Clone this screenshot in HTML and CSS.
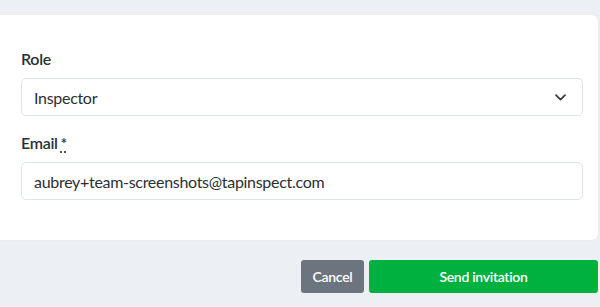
FILE: index.html
```html
<!DOCTYPE html>
<html>
<head>
<meta charset="utf-8">
<link rel="stylesheet" href="styles.css">
</head>
<body>
<div class="page">
  <div class="card">
    <div class="field">
      <label class="label">Role</label>
      <div class="select">
        <span>Inspector</span>
        <svg class="chev" width="11" height="7" viewBox="0 0 11 7"><path d="M1 1.2 L5.5 5.6 L10 1.2" fill="none" stroke="#343a40" stroke-width="1.7" stroke-linecap="round" stroke-linejoin="round"/></svg>
      </div>
    </div>
    <div class="field">
      <label class="label">Email <abbr class="req">*</abbr></label>
      <div class="input">aubrey+team-screenshots@tapinspect.com</div>
    </div>
  </div>
  <div class="actions">
    <button class="btn btn-cancel">Cancel</button>
    <button class="btn btn-send">Send invitation</button>
  </div>
</div>
</body>
</html>
```
FILE: styles.css
```css
html, body {
  margin: 0;
  padding: 0;
  background: #ecf0f4;
  font-family: Lato, "Liberation Sans", sans-serif;
  color: #212529;
}
.page {
  padding-top: 15px;
}
.card {
  background: #fff;
  margin-right: 2px;
  border-radius: 0 6px 6px 0;
  box-shadow: 0 0 1px rgba(0,0,0,0.12);
  padding: 32px 15px 40px 21px;
}
.field + .field {
  margin-top: 15px;
}
.label {
  display: block;
  font-size: 16px;
  font-weight: 600;
  letter-spacing: -0.3px;
  line-height: 24px;
  color: #2b2f33;
  margin-bottom: 7px;
}
.req {
  text-decoration: underline dotted;
  text-underline-offset: 3px;
  margin-left: -1px;
}
.select, .input {
  box-sizing: border-box;
  height: 38px;
  border: 1px solid #dbe5e8;
  border-radius: 5px;
  padding: 0 12px;
  display: flex;
  align-items: center;
  font-size: 16px;
  letter-spacing: -0.3px;
  color: #2b2f33;
}
.select {
  justify-content: space-between;
}
.chev {
  margin-right: 4px;
}
.actions {
  display: flex;
  justify-content: flex-end;
  gap: 5px;
  margin-top: 20px;
  margin-right: 2px;
}
.btn {
  border: none;
  border-radius: 3px;
  height: 33px;
  color: #fff;
  font-family: Lato, "Liberation Sans", sans-serif;
  font-size: 14px;
  font-weight: 600;
  letter-spacing: -0.3px;
  padding: 0;
}
.btn-cancel {
  background: #6c757d;
  width: 63px;
}
.btn-send {
  background: #00b140;
  width: 229px;
}
```
